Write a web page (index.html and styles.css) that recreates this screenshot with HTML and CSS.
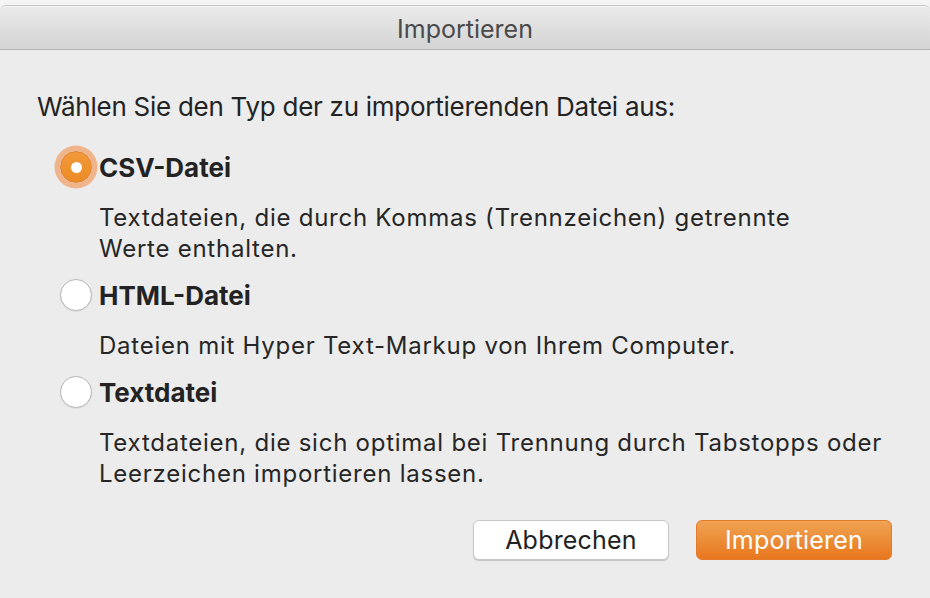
FILE: index.html
```html
<!DOCTYPE html>
<html lang="de">
<head>
<meta charset="utf-8">
<title>Importieren</title>
<link rel="stylesheet" href="styles.css">
</head>
<body>
<div class="window">
  <div class="titlestrip">
    <div class="titlebar">Importieren</div>
  </div>
  <div class="content">
    <p class="prompt">Wählen Sie den Typ der zu importierenden Datei aus:</p>
    <div class="options">
      <div class="option">
        <div class="option-head">
          <span class="radio checked"><span class="dot"></span></span>
          <span class="label">CSV-Datei</span>
        </div>
        <p class="desc">Textdateien, die durch Kommas (Trennzeichen) getrennte<br>Werte enthalten.</p>
      </div>
      <div class="option">
        <div class="option-head">
          <span class="radio"></span>
          <span class="label">HTML-Datei</span>
        </div>
        <p class="desc">Dateien mit Hyper Text-Markup von Ihrem Computer.</p>
      </div>
      <div class="option">
        <div class="option-head">
          <span class="radio"></span>
          <span class="label">Textdatei</span>
        </div>
        <p class="desc">Textdateien, die sich optimal bei Trennung durch Tabstopps oder<br>Leerzeichen importieren lassen.</p>
      </div>
    </div>
    <div class="buttons">
      <button class="btn btn-cancel">Abbrechen</button>
      <button class="btn btn-primary">Importieren</button>
    </div>
  </div>
</div>
</body>
</html>
```
FILE: styles.css
```css
* { box-sizing: border-box; }
html, body {
  margin: 0;
  padding: 0;
  background: #ececec;
  width: 930px;
  height: 598px;
  overflow: hidden;
  font-family: Inter, "Noto Sans", "Liberation Sans", sans-serif;
  color: #232323;
}
.titlestrip {
  background: #f4f4f4;
  padding-top: 5px;
}
.titlebar {
  height: 45px;
  border-top: 1px solid #c6c6c6;
  border-bottom: 1px solid #b4b4b4;
  border-radius: 6px 6px 0 0;
  background: linear-gradient(#ebebeb, #d4d4d4);
  box-shadow: inset 0 1px 0 #f6f6f6;
  display: flex;
  align-items: center;
  justify-content: center;
  font-size: 25px;
  color: #4a4a4a;
  padding-top: 2px;
}
.content {
  padding: 0 37px;
}
.prompt {
  margin: 41px 0 0;
  font-size: 26px;
  line-height: 31px;
  letter-spacing: -0.27px;
}
.options {
  margin-top: 25px;
}
.option-head {
  display: flex;
  align-items: center;
  height: 40px;
}
.radio {
  width: 32px;
  height: 32px;
  margin-left: 23px;
  margin-right: 7px;
  border-radius: 50%;
  background: #fff;
  border: 1px solid #b9b9b9;
  box-shadow: 0 0.5px 1px rgba(0,0,0,0.12);
  display: flex;
  align-items: center;
  justify-content: center;
  flex: none;
}
.radio.checked {
  background: linear-gradient(#f29a3c, #ec8a26);
  border: 1px solid #e0822a;
  box-shadow: 0 0 0 5.5px #efb48a;
}
.dot {
  width: 11px;
  height: 11px;
  border-radius: 50%;
  background: #fff;
}
.label {
  font-weight: 700;
  font-size: 26px;
  line-height: 31px;
}
.desc {
  margin: 15px 0 11px 62px;
  font-size: 24px;
  line-height: 31px;
  letter-spacing: 0.75px;
  color: #262626;
}
.buttons {
  display: flex;
  justify-content: flex-end;
  gap: 27px;
  margin-top: 31px;
  padding-right: 1px;
}
.btn {
  font-family: inherit;
  height: 40px;
  width: 196px;
  border-radius: 6px;
  font-size: 25px;
  letter-spacing: 0.2px;
  padding: 0;
}
.btn-cancel {
  background: #fff;
  border: 1px solid #c9c9c9;
  box-shadow: 0 1px 1px rgba(0,0,0,0.18);
  color: #222;
}
.btn-primary {
  background: linear-gradient(#efa352, #e8771e);
  border: 1px solid #e27c2c;
  color: #fff;
}
```
